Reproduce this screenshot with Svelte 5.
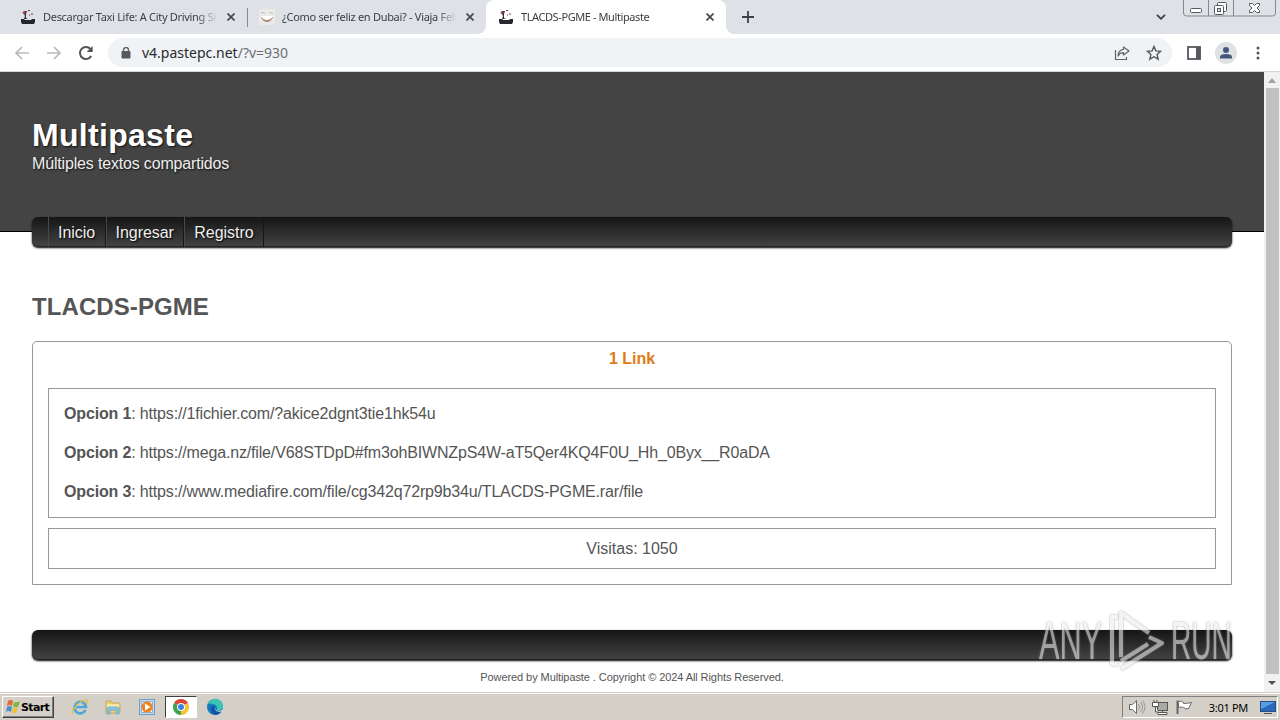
<script lang="ts">
	interface Tab {
		title: string;
		icon: 'site' | 'face';
		active?: boolean;
	}

	const tabs: Tab[] = [
		{ title: 'Descargar Taxi Life: A City Driving Simulator', icon: 'site' },
		{ title: '¿Como ser feliz en Dubai? - Viaja Feliz', icon: 'face' },
		{ title: 'TLACDS-PGME - Multipaste', icon: 'site', active: true }
	];

	const menu = ['Inicio', 'Ingresar', 'Registro'];

	const links = [
		{ label: 'Opcion 1', url: 'https://1fichier.com/?akice2dgnt3tie1hk54u' },
		{ label: 'Opcion 2', url: 'https://mega.nz/file/V68STDpD#fm3ohBIWNZpS4W-aT5Qer4KQ4F0U_Hh_0Byx__R0aDA' },
		{ label: 'Opcion 3', url: 'https://www.mediafire.com/file/cg342q72rp9b34u/TLACDS-PGME.rar/file' }
	];
</script>

<div class="screen">
	<div class="tabstrip">
		{#each tabs as tab, i}
			<div class="tab" class:active={tab.active} class:divided={i === 1}>
				{#if tab.icon === 'site'}
					<svg width="16" height="16" viewBox="0 0 16 16">
						<path d="M1 10h3l1 1h6l1-1h3v3l-1 2H2l-1-2z" fill="#25262e" />
						<path d="M3 3l2-1h2l-1 3v4l2 1H4l1-3-1-2z" fill="#30313a" />
						<circle cx="4" cy="3.8" r="1.4" fill="#a8434c" />
						<path d="M8 1.500h2M12 4v2M9 6h1" stroke="#6b3c46" />
					</svg>
				{:else}
					<svg width="16" height="16" viewBox="0 0 16 16">
						<rect width="16" height="16" rx="2" fill="#eceae8" />
						<path d="M2 4q2-1 4 0M10 4q2-1 4 0" stroke="#c9b8aa" fill="none" />
						<path d="M2 8h12q-2 5-6 5T2 8z" fill="#a88a76" />
						<path d="M2 7h12q-2 4-6 4T2 7z" fill="#fff" />
					</svg>
				{/if}
				<span class="tab-title">{tab.title}</span>
				<svg class="tab-close" width="8" height="8" viewBox="0 0 8 8">
					<path d="M.5.5l7 7M7.500.5l-7 7" stroke="#45484d" stroke-width="1.700" />
				</svg>
			</div>
		{/each}
		<svg class="new-tab" width="12" height="12" viewBox="0 0 12 12">
			<path d="M6 0v12M0 6h12" stroke="#3c4043" stroke-width="1.800" />
		</svg>
		<svg class="chevron" width="10" height="6" viewBox="0 0 10 6">
			<path d="M1 .8l4 4 4-4" stroke="#3c4043" stroke-width="1.800" fill="none" />
		</svg>
		<svg class="window-buttons" width="94" height="18" viewBox="0 0 94 18">
			<path d="M.5 0v13q0 3 3 3h86q3 0 3-3V0M25.500 0v16M50.500 0v16" stroke="#85888e" fill="none" />
			<rect x="7.500" y="8.500" width="11" height="4" rx="1" fill="#fff" stroke="#55585e" />
			<rect x="34.500" y="2.500" width="9" height="9" rx="1" fill="#fff" stroke="#55585e" />
			<rect x="31.500" y="5.500" width="9" height="9" rx="1" fill="#fff" stroke="#55585e" />
			<rect x="34.500" y="8.500" width="3" height="3" fill="#dee1e6" stroke="#55585e" />
			<path d="M66.500 3.500h3l2 2 2-2h3v2l-2.500 2.500 2.500 2.500v2h-3l-2-2-2 2h-3v-2l2.500-2.500-2.500-2.500z" fill="#fff" stroke="#55585e" />
		</svg>
	</div>

	<div class="toolbar">
		<svg class="nav-icon" width="16" height="16" viewBox="0 0 16 16">
			<path d="M15 8H2M8 2L2 8l6 6" stroke="#b8babd" stroke-width="1.700" fill="none" />
		</svg>
		<svg class="nav-icon" width="16" height="16" viewBox="0 0 16 16">
			<path d="M1 8h13M8 2l6 6-6 6" stroke="#b8babd" stroke-width="1.700" fill="none" />
		</svg>
		<svg class="nav-icon" width="16" height="16" viewBox="0 0 16 16">
			<path d="M13.200 11A6 6 0 1 1 12.500 4" stroke="#505357" stroke-width="2" fill="none" />
			<path d="M14.700 1v6H8.700z" fill="#505357" />
		</svg>
		<div class="omnibox">
			<svg width="10" height="12" viewBox="0 0 10 12">
				<path d="M2.500 5V3a2.500 2.500 0 0 1 5 0v2" stroke="#5f6368" stroke-width="1.400" fill="none" />
				<rect x=".5" y="4" width="9" height="7.500" rx="1" fill="#55595e" />
			</svg>
			<span class="address">v4.pastepc.net<span class="query">/?v=930</span></span>
			<svg class="share" width="16" height="16" viewBox="0 0 16 16">
				<path d="M1.500 5v9.500h11V12" stroke="#5f6368" stroke-width="1.200" fill="none" />
				<path d="M9.500 2l5.500 4-5.500 4V7.700Q6 7.500 4 11q.3-6 5.500-6.700z" stroke="#5f6368" stroke-width="1.200" fill="none" stroke-linejoin="round" />
			</svg>
			<svg width="16" height="16" viewBox="0 0 16 16">
				<path d="M8 1.500l1.900 4.400 4.800.4-3.600 3.200 1.100 4.700L8 11.700l-4.200 2.500 1.100-4.700L1.300 6.300l4.800-.4z" stroke="#55595e" stroke-width="1.400" fill="none" />
			</svg>
		</div>
		<svg class="panel" width="14" height="14" viewBox="0 0 14 14">
			<rect x="1" y="1" width="12" height="12" stroke="#55585d" stroke-width="1.800" fill="none" />
			<rect x="9" y="1" width="4.500" height="12" fill="#55585d" />
		</svg>
		<svg class="avatar" width="22" height="22" viewBox="0 0 22 22">
			<circle cx="11" cy="11" r="11" fill="#dfe1e5" />
			<circle cx="11" cy="8" r="3" fill="#47577c" />
			<path d="M5 16.500v-1.500q0-3 6-3t6 3v1.500z" fill="#47577c" />
		</svg>
		<svg width="4" height="14" viewBox="0 0 4 14" fill="#505357">
			<circle cx="2" cy="2" r="1.500" />
			<circle cx="2" cy="7" r="1.500" />
			<circle cx="2" cy="12" r="1.500" />
		</svg>
	</div>

	<div class="viewport">
		<div class="page">
			<header>
				<h1>Multipaste</h1>
				<p>Múltiples textos compartidos</p>
			</header>
			<nav class="bar">
				{#each menu as item}
					<a href="#{item.toLowerCase()}">{item}</a>
				{/each}
			</nav>
			<main>
				<h2>TLACDS-PGME</h2>
				<section class="paste">
					<h3>1 Link</h3>
					<div class="links">
						{#each links as link}
							<p><b>{link.label}</b>: <span>{link.url}</span></p>
						{/each}
					</div>
					<div class="visits"><span>Visitas: 1050</span></div>
				</section>
			</main>
			<div class="bar footer-bar"></div>
			<footer>Powered by Multipaste . Copyright © 2024 All Rights Reserved.</footer>
		</div>
		<div class="scrollbar">
			<svg width="16" height="16" viewBox="0 0 16 16"><path d="M4 11l4-5 4 5z" fill="#a3a3a3" /></svg>
			<div class="thumb"></div>
			<svg width="16" height="18" viewBox="0 0 16 18"><path d="M4 7l4 4 4-4z" fill="#505050" /></svg>
		</div>
	</div>

	<div class="watermark">
		<span class="any">ANY</span>
		<svg width="58" height="64" viewBox="0 0 58 64" fill="none" stroke-linejoin="round">
			<path d="M10 8H4v47h6M41 24L13 4v44M41 28l13 6-41 26M13 52l27-17" stroke="#eee" stroke-width="4" />
		</svg>
		<span class="run">RUN</span>
	</div>

	<div class="taskbar">
		<div class="start">
			<svg width="16" height="16" viewBox="0 0 16 16">
				<path d="M3 2q3-2 5 0L7 7Q5 5 2 7z" fill="#e46832" />
				<path d="M9 3q3 1 6-1l-2 6q-3 1-5-1z" fill="#83b643" />
				<path d="M2 8q3-2 5 0l-1 5q-3-2-5 0z" fill="#4a8ed0" />
				<path d="M8 8q3 2 5 0l-2 6q-2 1-4-1z" fill="#f1bf38" />
			</svg>
			<b>Start</b>
		</div>
		<div class="launch">
			<svg width="18" height="18" viewBox="0 0 18 18">
				<path d="M14.500 12A5.800 5.800 0 1 1 15 9H5" fill="none" stroke="#4ba6dc" stroke-width="2.600" />
				<path d="M2 16Q-1 14 6 7t11-4q0 2-2 3" fill="none" stroke="#e4bd48" stroke-width="1.400" />
			</svg>
		</div>
		<div class="launch">
			<svg width="18" height="18" viewBox="0 0 18 18">
				<path d="M2 3h5l1 2h8v10H2z" fill="#e8cf74" stroke="#c9ad57" />
				<path d="M3 6h12v4H3z" fill="#f7eaaa" />
				<path d="M3 16v-5q0-2 2-2h8q2 0 2 2v5h-3v-4H6v4z" fill="#8bc3e3" stroke="#62a3c9" stroke-width=".7" />
			</svg>
		</div>
		<div class="launch">
			<svg width="18" height="18" viewBox="0 0 18 18">
				<rect x="1.500" y="1.500" width="15" height="15" fill="#c5daec" stroke="#6f9cc9" />
				<rect x="3.500" y="3.500" width="11" height="11" fill="#eef4fa" stroke="#8fb3d5" />
				<circle cx="9" cy="9" r="5.500" fill="#ef8120" />
				<path d="M7 5.500l5.500 3.500L7 12.500z" fill="#fff" />
			</svg>
		</div>
		<div class="launch current">
			<svg width="16" height="16" viewBox="0 0 16 16">
				<path d="M8 8L1.070 4A8 8 0 0 1 14.930 4z" fill="#dc4437" />
				<path d="M8 8l6.930-4A8 8 0 0 1 8 16z" fill="#f5c432" />
				<path d="M8 8v8A8 8 0 0 1 1.070 4z" fill="#3ca153" />
				<circle cx="8" cy="8" r="4" fill="#fff" />
				<circle cx="8" cy="8" r="3" fill="#4280e4" />
			</svg>
		</div>
		<div class="launch">
			<svg width="18" height="18" viewBox="0 0 18 18">
				<circle cx="9" cy="9" r="8" fill="#1478bf" />
				<path d="M2 6Q5 0 11 1q6 2 6 8-1 4-6 3 1-5-4-6-3-1-5 0z" fill="#3cc5b1" />
				<path d="M16 12q-2 2-6 1-3-2-1-5-5 0-4 4 1 4 5 5 4-1 6-5z" fill="#1054a0" />
				<path d="M10 8q-2 3 1 4.500 3 1 6-1l1 3-3-1q-5 1-6-3z" fill="#d5dbd7" />
			</svg>
		</div>
		<div class="tray">
			<svg width="18" height="16" viewBox="0 0 18 16">
				<path d="M1.500 5.500h3l4-4v13l-4-4h-3z" fill="#fff" stroke="#696969" />
				<path d="M10.500 5q2 3 0 6M12.500 3q4 5 0 10M14.500 1.500q5 6.500 0 13" stroke="#999" fill="none" />
			</svg>
			<svg width="18" height="16" viewBox="0 0 18 16">
				<rect x="5.500" y="3.500" width="10" height="8" fill="#aaa" stroke="#555" />
				<path d="M6 13.500h9v2H6zM10.500 12v2" fill="#fff" stroke="#555" />
				<path d="M.5 3.500h6v4h-6zM2 1v2M5 1v2M3.500 8v5h3" fill="#fff" stroke="#555" />
			</svg>
			<svg width="18" height="16" viewBox="0 0 18 16">
				<path d="M1.500 15V1.500" stroke="#666" stroke-width="2" />
				<path d="M2.500 2.500q3-1 5 1v1q4 0 8-1l-3 6q-3 1-5-1-2-1-5 0z" fill="#fff" stroke="#696969" />
			</svg>
			<span class="clock">3:01 PM</span>
			<svg class="desktop" width="16" height="14" viewBox="0 0 16 14">
				<rect x=".5" y="1.500" width="15" height="10" fill="#2869bd" stroke="#274c88" />
				<path d="M1 2h14L1 9z" fill="#589ee3" />
				<path d="M4 13.500h8" stroke="#456" />
			</svg>
		</div>
	</div>
</div>

<style>
	:global(body) {
		overflow: hidden;
	}

	.screen {
		position: relative;
		display: flex;
		flex-direction: column;
		width: 1280px;
		height: 720px;
		overflow: hidden;
		background: #fff;
		font-family: 'Liberation Sans', Arial, sans-serif;
	}

	svg {
		display: block;
		flex-shrink: 0;
	}

	/* browser tabs */
	.tabstrip {
		display: flex;
		height: 34px;
		padding-left: 8px;
		background: #dee1e6;
		box-sizing: border-box;
	}

	.tab {
		position: relative;
		display: flex;
		align-items: center;
		width: 239px;
		padding: 0 12px;
		box-sizing: border-box;
		font: 11px 'Noto Sans', sans-serif;
		color: #3c4043;
	}

	.tab.active {
		width: 240px;
		border-radius: 8px 8px 0 0;
		background: #fff;
	}

	.tab.active::before,
	.tab.active::after {
		content: '';
		position: absolute;
		bottom: 0;
		width: 8px;
		height: 8px;
	}

	.tab.active::before {
		left: -8px;
		background: radial-gradient(circle at 0 0, transparent 7.5px, #fff 8px);
	}

	.tab.active::after {
		right: -8px;
		background: radial-gradient(circle at 100% 0, transparent 7.5px, #fff 8px);
	}

	.tab.divided::before {
		content: '';
		position: absolute;
		left: 0;
		top: 8px;
		width: 1px;
		height: 19px;
		background: #868a90;
	}

	.tab-title {
		width: 175px;
		margin-left: 7px;
		padding-bottom: 2px;
		overflow: hidden;
		white-space: nowrap;
		letter-spacing: -0.3px;
		-webkit-mask-image: linear-gradient(to right, #000 154px, transparent 175px);
		mask-image: linear-gradient(to right, #000 154px, transparent 175px);
	}

	.active .tab-title {
		letter-spacing: -0.41px;
	}

	.tab-close {
		margin-left: 10.500px;
	}

	.new-tab {
		margin: 11px 0 0 16px;
	}

	.chevron {
		margin: 14px 17px 0 auto;
	}

	.window-buttons {
		margin-right: 3px;
	}

	.toolbar {
		display: flex;
		align-items: center;
		height: 38px;
		padding: 0 20px 0 14px;
		box-sizing: border-box;
		border-bottom: 1px solid #d5d7da;
	}

	.nav-icon {
		margin-right: 16px;
	}

	.omnibox {
		display: flex;
		align-items: center;
		width: 1064px;
		height: 29px;
		margin-left: -2px;
		padding: 0 10px 0 13px;
		box-sizing: border-box;
		border-radius: 15px;
		background: #f0f3f5;
	}

	.address {
		margin-left: 11px;
		font: 14px 'Noto Sans', sans-serif;
		color: #292b2e;
	}

	.query {
		color: #6c7074;
	}

	.share {
		margin: 0 16px 0 auto;
	}

	.panel {
		margin-left: 15px;
	}

	.avatar {
		margin: 0 19px 0 14px;
	}

	/* web page */
	.viewport {
		display: flex;
		height: 620px;
	}

	.page {
		width: 1264px;
		height: 620px;
		overflow: hidden;
		color: #555;
		font-size: 16px;
	}

	header {
		height: 160px;
		padding: 45px 32px 0;
		box-sizing: border-box;
		background: #444;
		border-bottom: 1px solid #000;
		color: #fff;
		text-shadow: 1px 1px 2px #111;
	}

	h1 {
		margin: 0;
		font-size: 32px;
		line-height: 36px;
		letter-spacing: 0.3px;
	}

	header p {
		margin: 0;
		line-height: 22px;
		letter-spacing: -0.17px;
		color: #eee;
	}

	.bar {
		position: relative;
		display: flex;
		height: 30px;
		margin: -15px 32px 0;
		padding-left: 16px;
		box-sizing: border-box;
		border-radius: 6px;
		background: linear-gradient(#151515, #444);
		box-shadow: 0 1px 2px #000, inset 0 -1px #222;
	}

	.bar a {
		padding: 0 9.500px 0 9px;
		border-left: 1px solid #484848;
		border-right: 1px solid #161616;
		color: #eee;
		line-height: 32px;
		height: 30px;
		letter-spacing: -0.05px;
		text-decoration: none;
		text-shadow: 1px 1px 2px #000;
	}

	main {
		padding: 45px 32px 0;
	}

	h2 {
		margin: 0;
		font-size: 24px;
		line-height: 30px;
		letter-spacing: 0.08px;
	}

	.paste {
		height: 244px;
		margin-top: 19px;
		padding: 0 15px;
		box-sizing: border-box;
		border: 1px solid #999;
		border-radius: 5px 5px 0 0;
	}

	h3 {
		margin: 0;
		height: 46px;
		font-size: 16px;
		line-height: 33px;
		text-align: center;
		color: #e07b15;
	}

	.links {
		height: 130px;
		padding: 5px 15px;
		box-sizing: border-box;
		border: 1px solid #999;
	}

	.links p {
		margin: 0;
		line-height: 39px;
		letter-spacing: -0.16px;
	}

	.visits {
		height: 41px;
		margin-top: 10px;
		box-sizing: border-box;
		border: 1px solid #999;
		text-align: center;
		line-height: 39px;
	}

	.footer-bar {
		margin-top: 45px;
	}

	footer {
		margin-top: 10px;
		font-size: 11px;
		line-height: 14px;
		letter-spacing: -0.08px;
		text-align: center;
	}

	.scrollbar {
		display: flex;
		flex-direction: column;
		width: 16px;
		background: #f1f1f1;
	}

	.thumb {
		flex: 1;
		margin: 0 1px 0 2px;
		background: #c1c1c1;
	}

	.watermark {
		position: absolute;
		left: 1039px;
		top: 608px;
		display: flex;
		align-items: center;
		width: 194px;
		height: 66px;
		color: #eee;
		opacity: 0.6;
		filter: drop-shadow(0 0 1px #777);
	}

	.watermark span {
		width: 62px;
		font-size: 53px;
		line-height: 66px;
		transform-origin: left;
	}

	.watermark .any {
		transform: scaleX(0.58);
	}

	.watermark .run {
		transform: scaleX(0.53);
	}

	.watermark svg {
		margin: 0 5px 0 7px;
	}

	/* desktop taskbar */
	.taskbar {
		display: flex;
		align-items: center;
		height: 28px;
		padding: 2px 2px 1px;
		box-sizing: border-box;
		background: #d4d0c8;
		border-top: 1px solid #d4d0c8;
		box-shadow: inset 0 1px #fff;
	}

	.start {
		display: flex;
		align-items: center;
		width: 52px;
		height: 22px;
		padding-left: 2px;
		box-sizing: border-box;
		border: 1px solid;
		border-color: #fff #404040 #404040 #fff;
		box-shadow: inset -1px -1px #808080;
		margin-right: 9.500px;
	}

	.start b {
		font: bold 11px 'DejaVu Sans', sans-serif;
		letter-spacing: -0.65px;
		color: #000;
	}

	.launch {
		display: flex;
		align-items: center;
		justify-content: center;
		width: 32px;
		height: 22px;
		margin-right: 1.800px;
		box-sizing: border-box;
	}

	.launch.current {
		background: #fff;
		border: 1px solid;
		border-color: #404040 #fff #fff #404040;
	}

	.tray {
		display: flex;
		align-items: center;
		gap: 6px;
		width: 156px;
		height: 22px;
		margin-left: auto;
		padding: 0 1px 0 5px;
		box-sizing: border-box;
		border: 1px solid;
		border-color: #808080 #fff #fff #808080;
	}

	.clock {
		margin-left: auto;
		font: 11px 'Noto Sans', sans-serif;
		letter-spacing: -0.3px;
		color: #000;
	}

	.desktop {
		margin-left: 6px;
	}
</style>
